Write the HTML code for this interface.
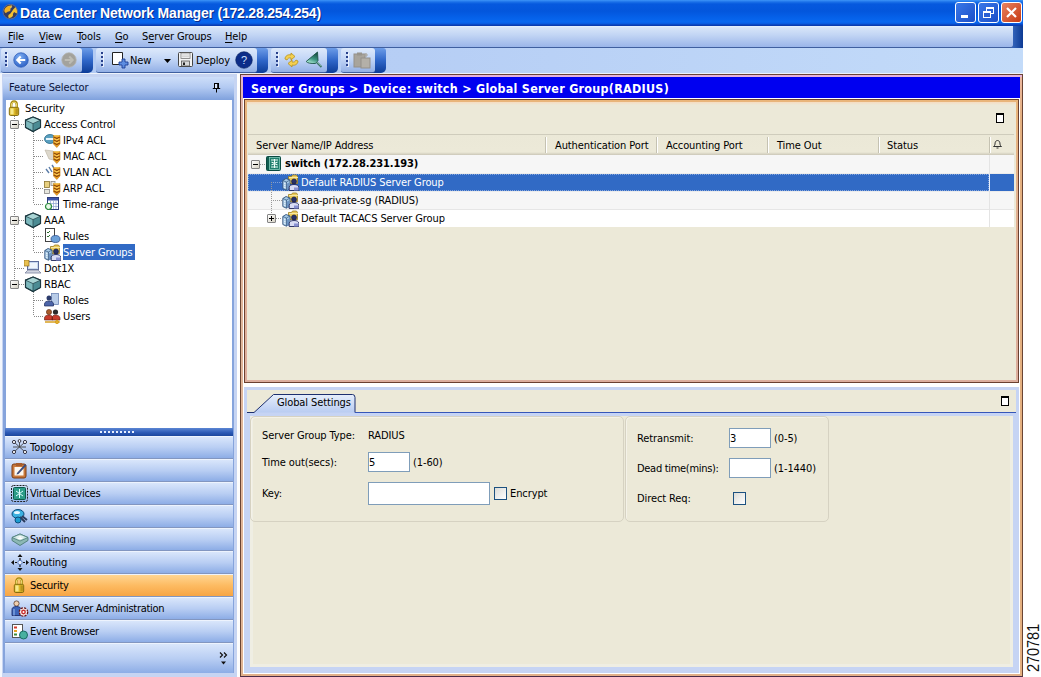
<!DOCTYPE html>
<html lang="en">
<head>
<meta charset="utf-8">
<title>Data Center Network Manager</title>
<style>
*{box-sizing:border-box}
html,body{margin:0;padding:0}
body{width:1041px;height:677px;background:#fff;position:relative;overflow:hidden;font-family:"DejaVu Sans Condensed","Liberation Sans",sans-serif;font-size:11px;color:#000;line-height:13px;letter-spacing:-.1px}
.abs{position:absolute}
#win{left:0;top:0;width:1023px;height:677px;background:#c2d8f8;overflow:hidden}
#title{left:0;top:0;width:1023px;height:26px;background:linear-gradient(#3d95f8 0,#1a70e8 2px,#0659de 4px,#0356dc 11px,#0560e8 17px,#0868f0 22px,#0858dc 24px,#0a3cb0 25px,#0a3cb0 26px)}
#title .t{left:20px;top:6px;color:#fff;font:bold 14px "Liberation Sans",sans-serif;letter-spacing:-.2px;line-height:15px;white-space:nowrap;text-shadow:1px 1px 0 #0a2a88}
.wb{top:2px;width:21px;height:21px;border:1px solid #fff;border-radius:3px;background:linear-gradient(135deg,#3a78e8,#1c4fc8)}
#menubar{left:0;top:26px;width:1013px;height:22px;background:linear-gradient(#e6f2fe 0,#d6e4f8 2px,#c2d5f4 9px,#9ab5e9 21px);border-bottom:1px solid #3f5f9f;border-radius:0 0 3px 0}
#menuend{left:1010px;top:26px;width:13px;height:22px;background:linear-gradient(90deg,#3d6ec4,#0c3a94)}
.mi{top:30px;white-space:nowrap}
.mi u{text-decoration:underline;text-underline-offset:2px;text-decoration-thickness:1px}
#toolrow{left:0;top:48px;width:1023px;height:26px;background:linear-gradient(90deg,#b2caf3,#b6cef5 40%,#c3dbf9)}
.tb{top:48px;height:25px;background:linear-gradient(#dde9fb,#c3d6f6 45%,#93b0e6);border-radius:3px 3px 3px 3px;border-bottom:1px solid #3f5f9f}
.tbe{top:48px;height:25px;background:linear-gradient(#6c9ce8,#2f66c8 50%,#0c3c98);border-radius:0 3px 5px 0}
.grip{width:2px;height:14px;top:52px;background:repeating-linear-gradient(#27408b 0 2px,transparent 2px 4px);box-shadow:1px 1px 0 rgba(255,255,255,.7)}
.tt{top:54px;white-space:nowrap}

.hs{top:137px;width:2px;height:16px;background:linear-gradient(90deg,#c5c2b2 0 1px,#fff 1px 2px)}
.ht{top:139px;white-space:nowrap}
.pm{width:9px;height:9px;border:1px solid #848484;background:linear-gradient(135deg,#fff,#d6d2c4);border-radius:1px}
.pm i{position:absolute;left:1px;top:3px;width:5px;height:1px;background:#000}
.pm b{position:absolute;left:3px;top:1px;width:1px;height:5px;background:#000}
.gb{border:1px solid #d6d2c2;border-radius:5px;box-shadow:inset 1px 1px 0 #f4f2e8}
.lb{white-space:nowrap}
.inp{border:1px solid #7f9db9;background:#fff}
.inp span{position:absolute;left:0;top:3px}
.cb{width:13px;height:13px;border:1px solid #1c5180;background:linear-gradient(135deg,#dcdcd7,#fff)}

.hd{height:1px;background:repeating-linear-gradient(90deg,#888 0 1px,transparent 1px 2px)}
.tl{white-space:nowrap}
.bl{letter-spacing:-.25px}
.sb{left:5px;width:228px;height:23px;background:linear-gradient(#d9e6fb,#b9cef3 50%,#8dade6);border-bottom:1px solid #8296c0;border-top:1px solid #edf3fd}
</style>
</head>
<body>

<svg width="0" height="0" style="position:absolute"><defs>
<g id="sg">
  <path d="M6.500 2.500h3l1-1.500h4l1 1.500v7h-9z" fill="#ecca58" stroke="#9c7c20" stroke-width=".8"/>
  <path d="M7 3.500h9" stroke="#f8e8a0" stroke-width="1"/>
  <path d="M.800 6.500l3.200-2 4 1.500v8l-3.600 2.200-3.600-1.700z" fill="#a8cce8" stroke="#34547c" stroke-width=".9"/>
  <path d="M4.400 8v8" stroke="#34547c" stroke-width=".8"/>
  <path d="M.800 6.500l3.600 1.500 3.600-2" fill="none" stroke="#34547c" stroke-width=".7"/>
  <path d="M1.800 9l1.800.8M1.800 11l1.800.8M1.800 13l1.800.8" stroke="#fff" stroke-width=".8"/>
  <path d="M5 9.500l2.200-1v6.500l-2.200 1.200z" fill="#6c94c4"/>
  <circle cx="12" cy="7.400" r="2.500" fill="#27306a" stroke="#10163c" stroke-width=".6"/>
  <path d="M7.200 16.500v-3c0-2 1.800-3 4.800-3s4.800 1 4.800 3v3z" fill="#d8dcf4" stroke="#1c2458" stroke-width=".9"/>
  <path d="M12 13.500h4.300v3H12z" fill="#8890d0"/>
</g>
</defs></svg>

<svg width="0" height="0" style="position:absolute"><defs>
<g id="lock"><path d="M3.200 8V5c0-4.600 5.600-4.600 5.600 0V8" fill="none" stroke="#a88a14" stroke-width="2.400"/><path d="M3.300 8V5c0-3.800 5.400-3.800 5.400 0V8" fill="none" stroke="#f4e27c" stroke-width="1"/><rect x="1.300" y="7.300" width="9.400" height="8.200" rx="1.400" fill="#dcb828" stroke="#7c6408" stroke-width=".9"/><rect x="2.400" y="8.400" width="3.200" height="6" fill="#f6e88c"/><rect x="7.500" y="8.400" width="2.400" height="6" fill="#b8941c"/></g>
<g id="cube"><path d="M9 1l7.500 3.200v7.300L9 15.500 1.500 11.500V4.200z" fill="#7cb8bc" stroke="#1c3840" stroke-width="1.100"/><path d="M9 7.600l7.500-3.400v7.300L9 15.500z" fill="#4c8c94"/><path d="M9 1l7.500 3.200L9 7.600 1.500 4.200z" fill="#a8d4d4"/><path d="M1.500 4.200L9 7.600l7.500-3.400M9 7.600v7.900" fill="none" stroke="#2c4c54" stroke-width=".8"/><path d="M9 1l7.500 3.200v7.300L9 15.500 1.500 11.500V4.200z" fill="none" stroke="#1c3840" stroke-width="1.100"/></g>
<g id="tl"><path d="M9.500 3.500h6.500v8.500l-3.200 3.500-3.300-3.500z" fill="#f0a020" stroke="#c07810" stroke-width=".6"/><path d="M9.800 5l3 1.500 3-1.500M9.800 8l3 1.500 3-1.500M9.800 11l3 1.500 3-1.500" fill="none" stroke="#8c4a0c" stroke-width="1.300"/><path d="M10 3.800h5.500M10.500 6.800l2.300 1 2.300-1M10.500 9.800l2.300 1 2.300-1" fill="none" stroke="#ffe070" stroke-width=".8"/></g>
</defs></svg>
<div id="win" class="abs">

<!-- title bar -->
<div id="title" class="abs">
  <svg class="abs" style="left:2px;top:3px" width="17" height="17" viewBox="0 0 17 17"><circle cx="8.300" cy="8.700" r="7.300" fill="#353c5e"/><path d="M3 5.500C4.500 3 7.500 2 9.500 2.500 10 4 9 5 8 5.500 9 6.500 8.500 8 7 8.500 5.500 8 5 9.500 3.500 10 2 9 2 7 3 5.500z" fill="#f2b020"/><path d="M13.500 4c1.500 1.500 2 4 1.500 6-1 .500-2 0-2.500-1-1 .500-2 2-1.500 3.500-.500 1.500-2 2.500-4 2.500-1-1-1-2.500 0-3.500 1.500-.500 2-2 3-3 .500-1.500 2-3 3.500-4.500z" fill="#f4c030"/><path d="M9.500 2.500C10 4 9 5 8 5.500" fill="none" stroke="#fff0a0" stroke-width=".6"/><circle cx="8.300" cy="8.700" r="7.300" fill="none" stroke="#5c6a94" stroke-width="1"/></svg>
  <div class="abs t">Data Center Network Manager (172.28.254.254)</div>
  <div class="abs wb" style="left:955px"><div class="abs" style="left:5px;top:12px;width:7px;height:3px;background:#fff"></div></div>
  <div class="abs wb" style="left:978px"><div class="abs" style="left:7px;top:4px;width:8px;height:7px;border:1px solid #fff;border-top-width:2px"></div><div class="abs" style="left:4px;top:8px;width:8px;height:7px;border:1px solid #fff;border-top-width:2px;background:#2a5fd4"></div></div>
  <div class="abs wb" style="left:1001px;background:linear-gradient(135deg,#e8825f,#c73a14)"><svg class="abs" style="left:3px;top:3px" width="13" height="13" viewBox="0 0 13 13"><path d="M2 2l9 9M11 2l-9 9" stroke="#fff" stroke-width="2.2"/></svg></div>
</div>

<!-- menu bar -->
<div id="menuend" class="abs"></div>
<div id="menubar" class="abs"></div>
<div class="abs mi" style="left:8px"><u>F</u>ile</div>
<div class="abs mi" style="left:39px"><u>V</u>iew</div>
<div class="abs mi" style="left:77px"><u>T</u>ools</div>
<div class="abs mi" style="left:115px"><u>G</u>o</div>
<div class="abs mi" style="left:142px">S<u>e</u>rver Groups</div>
<div class="abs mi" style="left:225px"><u>H</u>elp</div>

<!-- toolbars -->
<div id="toolrow" class="abs"></div>
<div class="abs tbe" style="left:72px;width:21px"></div>
<div class="abs tb" style="left:1px;width:81px"></div>
<div class="abs grip" style="left:5px"></div>
<svg class="abs" style="left:13px;top:52px" width="16" height="16" viewBox="0 0 17 17"><defs><radialGradient id="bk" cx=".4" cy=".3" r=".8"><stop offset="0" stop-color="#7fb0f4"/><stop offset="1" stop-color="#2458c0"/></radialGradient></defs><circle cx="8.500" cy="8.500" r="7.700" fill="url(#bk)" stroke="#2c5cb8" stroke-width=".8"/><path d="M13 8.500H5M8.200 4.800L4.500 8.500l3.700 3.700" fill="none" stroke="#fff" stroke-width="2.200"/></svg>
<div class="abs tt" style="left:32px">Back</div>
<svg class="abs" style="left:61px;top:52px" width="16" height="16" viewBox="0 0 17 17"><circle cx="8.500" cy="8.500" r="7.700" fill="#a3a29c" stroke="#b4b4b0" stroke-width=".8"/><path d="M4 8.500h8M8.800 4.800l3.700 3.700-3.700 3.700" fill="none" stroke="#bdbcb4" stroke-width="2"/></svg>

<div class="abs tbe" style="left:246px;width:22px"></div>
<div class="abs tb" style="left:96px;width:161px"></div>
<div class="abs grip" style="left:101px"></div>
<svg class="abs" style="left:112px;top:52px" width="17" height="17" viewBox="0 0 17 17"><path d="M.500 .500h10v12h-10z" fill="#fff" stroke="#222" stroke-width="1"/><path d="M10 8.500h3v3h3v3h-3v3h-3v-3h-3v-3h3z" transform="translate(0,-1.500)" fill="#5c8ce0" stroke="#1c3c94" stroke-width=".9"/></svg>
<div class="abs tt" style="left:130px">New</div>
<svg class="abs" style="left:164px;top:59px" width="7" height="4" viewBox="0 0 7 4"><path d="M0 0h7L3.500 4z" fill="#000"/></svg>
<svg class="abs" style="left:178px;top:52px" width="15" height="15" viewBox="0 0 15 15"><rect x=".5" y=".5" width="14" height="14" rx="1" fill="#f4f4f4" stroke="#444"/><rect x="3" y="1" width="9" height="5.500" fill="#fff" stroke="#777" stroke-width=".8"/><path d="M4 3h7M4 4.800h7" stroke="#aaa" stroke-width=".7"/><rect x="3.500" y="9" width="8" height="5" fill="#d8d8d8" stroke="#555" stroke-width=".8"/><rect x="5" y="10.500" width="2" height="2.500" fill="#222"/></svg>
<div class="abs tt" style="left:196px">Deploy</div>
<svg class="abs" style="left:235px;top:51px" width="18" height="18" viewBox="0 0 18 18"><circle cx="9" cy="9" r="8.300" fill="#0c2c88" stroke="#07205c" stroke-width=".6"/><text x="9" y="13" text-anchor="middle" font-family="Liberation Sans, sans-serif" font-size="11" fill="#cfe0ff">?</text></svg>

<div class="abs tbe" style="left:316px;width:22px"></div>
<div class="abs tb" style="left:271px;width:56px"></div>
<div class="abs grip" style="left:276px"></div>
<svg class="abs" style="left:283px;top:52px" width="17" height="17" viewBox="0 0 17 17"><path d="M2 7c0-3 3-5 6-4l0-2 4 3.500-4 3.500 0-2c-2-.5-3.500.5-4 2z" fill="#f4d050" stroke="#b8901c" stroke-width=".8"/><path d="M15 9c0 3-3 5-6 4l0 2-4-3.500 4-3.500 0 2c2 .5 3.500-.5 4-2z" fill="#f4d050" stroke="#b8901c" stroke-width=".8"/></svg>
<svg class="abs" style="left:305px;top:51px" width="18" height="18" viewBox="0 0 18 18"><defs><linearGradient id="fg" x1=".7" y1="0" x2=".3" y2="1"><stop offset="0" stop-color="#12483e"/><stop offset=".55" stop-color="#3c9480"/><stop offset="1" stop-color="#b4f0dc"/></linearGradient></defs><path d="M12.500 1L1.200 10.500Q3 12.800 10.500 12.500L13 9.500z" fill="url(#fg)" stroke="#1c5448" stroke-width=".9"/><path d="M11.500 11l5 5" stroke="#3c7468" stroke-width="2"/><path d="M11.800 10.600l4.600 4.600" stroke="#a8d8cc" stroke-width=".7"/></svg>

<div class="abs tbe" style="left:364px;width:22px"></div>
<div class="abs tb" style="left:341px;width:34px"></div>
<div class="abs grip" style="left:346px"></div>
<svg class="abs" style="left:353px;top:52px" width="18" height="17" viewBox="0 0 18 17"><rect x="1" y="2" width="11" height="13" fill="#a8a49c" stroke="#94908a"/><rect x="4" y=".500" width="5" height="3" fill="#98948c"/><rect x="8" y="6" width="9" height="10" fill="#b4b0a8" stroke="#94908a"/><path d="M13 1v4M11 3h4" stroke="#a8a49c" stroke-width="1.200"/></svg>

<!-- ===== left panel ===== -->
<div class="abs" style="left:0;top:74px;width:2px;height:603px;background:#f4f7fd"></div>
<div class="abs" style="left:2px;top:74px;width:235px;height:603px;background:#c6d4f2"></div>
<div class="abs" style="left:3px;top:77px;width:231px;height:23px;background:linear-gradient(#cddef9,#b3caf2 45%,#7fa1dd)"></div>
<div class="abs" style="left:9px;top:81px;color:#0a143c;white-space:nowrap">Feature Selector</div>
<svg class="abs" style="left:212px;top:83px" width="9" height="10" viewBox="0 0 9 10"><rect x="2.500" y=".500" width="4" height="5" fill="#dbe6fa" stroke="#000" stroke-width="1"/><path d="M6 .500v5" stroke="#000" stroke-width="1.600"/><path d="M.800 5.500h7.400M4.500 6v3.500" fill="none" stroke="#000" stroke-width="1"/></svg>
<div class="abs" style="left:3px;top:100px;width:231px;height:573px;background:#86a4dc"></div>
<div class="abs" style="left:6px;top:100px;width:226px;height:328px;background:#fff"></div>
<div class="abs" style="left:5px;top:428px;width:228px;height:8px;background:linear-gradient(#5c86d4,#2a58b4 60%,#1c469c)"></div>
<div class="abs" style="left:100px;top:431px;width:36px;height:2px;background:repeating-linear-gradient(90deg,#e8f0ff 0 2px,transparent 2px 4px)"></div>

<!-- tree -->
<div class="abs" style="left:14px;top:116px;width:1px;height:168px;background:repeating-linear-gradient(#888 0 1px,transparent 1px 2px)"></div>
<div class="abs" style="left:33px;top:132px;width:1px;height:72px;background:repeating-linear-gradient(#888 0 1px,transparent 1px 2px)"></div>
<div class="abs" style="left:33px;top:228px;width:1px;height:24px;background:repeating-linear-gradient(#888 0 1px,transparent 1px 2px)"></div>
<div class="abs" style="left:33px;top:292px;width:1px;height:24px;background:repeating-linear-gradient(#888 0 1px,transparent 1px 2px)"></div>
<div class="abs hd" style="left:19px;top:124px;width:6px"></div>
<div class="abs hd" style="left:19px;top:220px;width:6px"></div>
<div class="abs hd" style="left:15px;top:268px;width:10px"></div>
<div class="abs hd" style="left:19px;top:284px;width:6px"></div>
<div class="abs hd" style="left:34px;top:140px;width:10px"></div>
<div class="abs hd" style="left:34px;top:156px;width:10px"></div>
<div class="abs hd" style="left:34px;top:172px;width:10px"></div>
<div class="abs hd" style="left:34px;top:188px;width:10px"></div>
<div class="abs hd" style="left:34px;top:204px;width:10px"></div>
<div class="abs hd" style="left:34px;top:236px;width:10px"></div>
<div class="abs hd" style="left:34px;top:252px;width:10px"></div>
<div class="abs hd" style="left:34px;top:300px;width:10px"></div>
<div class="abs hd" style="left:34px;top:316px;width:10px"></div>

<svg class="abs" style="left:8px;top:100px" width="12" height="16" viewBox="0 0 12 16"><use href="#lock"/></svg>
<div class="abs tl" style="left:25px;top:102px">Security</div>

<div class="abs pm" style="left:10px;top:120px"><i></i></div>
<svg class="abs" style="left:24px;top:116px" width="18" height="16" viewBox="0 0 18 16"><use href="#cube"/></svg>
<div class="abs tl" style="left:44px;top:118px">Access Control</div>
<svg class="abs" style="left:44px;top:132px" width="17" height="16" viewBox="0 0 17 16"><ellipse cx="6" cy="7" rx="5.500" ry="4.500" fill="#5aa0c0" stroke="#2c6c8c" stroke-width=".8"/><rect x="2" y="6" width="8" height="2" fill="#e8f4fa"/><use href="#tl"/></svg>
<div class="abs tl" style="left:63px;top:134px">IPv4 ACL</div>
<svg class="abs" style="left:44px;top:148px" width="17" height="16" viewBox="0 0 17 16"><path d="M1 2l8 1 1 9-5-1z" fill="#ddd8cc" stroke="#b8b0a0" stroke-width=".6"/><use href="#tl"/></svg>
<div class="abs tl" style="left:63px;top:150px">MAC ACL</div>
<svg class="abs" style="left:44px;top:164px" width="17" height="16" viewBox="0 0 17 16"><path d="M2 5l3 4M5 3l3 5M8 1l2 3" stroke="#5a7ca8" stroke-width="1.400"/><use href="#tl"/></svg>
<div class="abs tl" style="left:63px;top:166px">VLAN ACL</div>
<svg class="abs" style="left:44px;top:180px" width="17" height="16" viewBox="0 0 17 16"><rect x=".5" y="1.500" width="5" height="6" fill="#e8d080" stroke="#8c7430" stroke-width=".8"/><rect x=".5" y="9.500" width="5" height="4" fill="#e8e8e0" stroke="#888" stroke-width=".8"/><rect x="7" y="1.500" width="4" height="4" fill="#e8e8e0" stroke="#888" stroke-width=".8"/><use href="#tl"/></svg>
<div class="abs tl" style="left:63px;top:182px">ARP ACL</div>
<svg class="abs" style="left:44px;top:196px" width="17" height="16" viewBox="0 0 17 16"><rect x="3.500" y="1.500" width="11" height="12" fill="#fff" stroke="#2c3c7c" stroke-width="1"/><rect x="4" y="2" width="10" height="2.500" fill="#3c54a8"/><path d="M6.500 5v8M9.500 5v8M12 5v8M4 7.500h10M4 10.500h10" stroke="#8ca0d0" stroke-width=".7"/><circle cx="4.500" cy="10.500" r="3" fill="#e8f8e8" stroke="#2c8c3c" stroke-width="1.200"/></svg>
<div class="abs tl" style="left:63px;top:198px">Time-range</div>

<div class="abs pm" style="left:10px;top:216px"><i></i></div>
<svg class="abs" style="left:24px;top:212px" width="18" height="16" viewBox="0 0 18 16"><use href="#cube"/></svg>
<div class="abs tl" style="left:44px;top:214px">AAA</div>
<svg class="abs" style="left:44px;top:228px" width="17" height="16" viewBox="0 0 17 16"><rect x="1.500" y=".500" width="9" height="13" fill="#fff" stroke="#444" stroke-width="1"/><path d="M3 4l1 1 2-2M3 8l1 1 2-2" stroke="#2c6c2c" stroke-width="1" fill="none"/><ellipse cx="11.500" cy="11" rx="4.500" ry="3.500" fill="#6ca0d8" stroke="#2c4c8c" stroke-width=".8"/></svg>
<div class="abs tl" style="left:63px;top:230px">Rules</div>
<div class="abs" style="left:63px;top:244px;width:72px;height:16px;background:#316ac5"></div>
<svg class="abs" style="left:44px;top:244px" width="17" height="17" viewBox="0 0 17 17"><use href="#sg"/></svg>
<div class="abs tl" style="left:63px;top:246px;color:#fff">Server Groups</div>

<svg class="abs" style="left:24px;top:260px" width="18" height="16" viewBox="0 0 18 16"><rect x="3.500" y="1.500" width="11" height="8" fill="#c8d8f0" stroke="#5c6c9c" stroke-width="1"/><rect x="5" y="3" width="8" height="5" fill="#eef4fc"/><path d="M1 13l3-3h10l3 3z" fill="#d0d4e0" stroke="#7c84a0" stroke-width=".8"/><rect x="0" y="0" width="5" height="6" fill="#e8c050" stroke="#8c6c20" stroke-width=".7"/></svg>
<div class="abs tl" style="left:44px;top:262px">Dot1X</div>

<div class="abs pm" style="left:10px;top:280px"><i></i></div>
<svg class="abs" style="left:24px;top:276px" width="18" height="16" viewBox="0 0 18 16"><use href="#cube"/></svg>
<div class="abs tl" style="left:44px;top:278px">RBAC</div>
<svg class="abs" style="left:44px;top:292px" width="17" height="16" viewBox="0 0 17 16"><rect x="7.500" y="1.500" width="7" height="11" fill="#b8cce8" stroke="#6c84b4" stroke-width=".8"/><circle cx="5" cy="6" r="2.500" fill="#2c3c6c"/><path d="M.500 14v-2c0-2 2-3 4.500-3s4.500 1 4.500 3v2z" fill="#4c64a8" stroke="#1c2c5c" stroke-width=".7"/></svg>
<div class="abs tl" style="left:63px;top:294px">Roles</div>
<svg class="abs" style="left:44px;top:308px" width="17" height="16" viewBox="0 0 17 16"><circle cx="5" cy="4" r="2.600" fill="#a85c2c" stroke="#5c2c10" stroke-width=".6"/><circle cx="11.500" cy="4" r="2.600" fill="#2c2c2c"/><path d="M.500 12v-2c0-2 2-3 4.500-3s3.500 1 3.500 3v2zM8 12v-2c0-2 1.500-3 3.500-3s4.500 1 4.500 3v2z" fill="#c83c2c" stroke="#5c1c10" stroke-width=".6"/><path d="M1 14h10M11 14l2-1.500 2 1.500-2 1.500z" stroke="#d8a020" stroke-width="1.500" fill="#f0c840"/></svg>
<div class="abs tl" style="left:63px;top:310px">Users</div>

<!-- stacked buttons -->
<div class="abs sb" style="top:436px"></div><div class="abs tl" style="left:30px;top:441px;letter-spacing:0px">Topology</div>
<div class="abs sb" style="top:459px"></div><div class="abs tl" style="left:30px;top:464px;letter-spacing:0px">Inventory</div>
<div class="abs sb" style="top:482px"></div><div class="abs tl" style="left:30px;top:487px;letter-spacing:-0.28px">Virtual Devices</div>
<div class="abs sb" style="top:505px"></div><div class="abs tl" style="left:30px;top:510px;letter-spacing:0px">Interfaces</div>
<div class="abs sb" style="top:528px"></div><div class="abs tl" style="left:30px;top:533px;letter-spacing:-0.28px">Switching</div>
<div class="abs sb" style="top:551px"></div><div class="abs tl" style="left:30px;top:556px;letter-spacing:-0.1px">Routing</div>
<div class="abs sb" style="top:574px;background:linear-gradient(#ffd592,#fdbb62 50%,#f7a544)"></div><div class="abs tl" style="left:30px;top:579px;letter-spacing:-0.25px">Security</div>
<div class="abs sb" style="top:597px"></div><div class="abs tl" style="left:30px;top:602px;letter-spacing:-0.28px">DCNM Server Administration</div>
<div class="abs sb" style="top:620px"></div><div class="abs tl" style="left:30px;top:625px;letter-spacing:-0.2px">Event Browser</div>
<div class="abs sb" style="top:643px;height:30px;border-bottom:none"></div>
<svg class="abs" style="left:219px;top:652px" width="9" height="13" viewBox="0 0 9 13"><path d="M1 .500l2.500 2.500-2.500 2.500M5 .500l2.500 2.500-2.500 2.500" fill="none" stroke="#111" stroke-width="1.200"/><path d="M2 9.500h5l-2.500 3z" fill="#111"/></svg>

<!-- button icons -->
<svg class="abs" style="left:11px;top:439px" width="17" height="17" viewBox="0 0 17 17"><path d="M3 3l11 10M14 3l-11 10M8.500 2v6M2 8h13" stroke="#444" stroke-width=".9"/><circle cx="3" cy="3" r="1.600" fill="#fff" stroke="#334"/><circle cx="14" cy="3" r="1.600" fill="#fff" stroke="#334"/><circle cx="3" cy="13" r="1.600" fill="#fff" stroke="#334"/><circle cx="14" cy="13" r="1.600" fill="#fff" stroke="#334"/><circle cx="8.500" cy="2" r="1.400" fill="#fff" stroke="#334"/></svg>
<svg class="abs" style="left:11px;top:462px" width="17" height="17" viewBox="0 0 17 17"><rect x="1" y="2" width="14" height="14" rx="2" fill="#c8783c" stroke="#7c3c14"/><rect x="3.500" y="5" width="9" height="8.500" fill="#fdf8f0"/><rect x="5" y="1" width="6" height="3" fill="#a85c2c"/><path d="M6 11l8-9 1.500 1.500-8 8.500-2 .500z" fill="#3c4c7c"/></svg>
<svg class="abs" style="left:11px;top:485px" width="17" height="17" viewBox="0 0 17 17"><rect x=".5" y=".5" width="16" height="16" rx="2" fill="none" stroke="#222" stroke-dasharray="2 1"/><rect x="2.500" y="2.500" width="12" height="12" rx="1" fill="#2c9c88" stroke="#0c5c4c"/><path d="M8.500 4v9M5 6l7 5M12 6l-7 5" stroke="#dff" stroke-width="1"/></svg>
<svg class="abs" style="left:11px;top:508px" width="18" height="17" viewBox="0 0 18 17"><ellipse cx="7" cy="6" rx="6" ry="4.500" fill="#3cb0e0" stroke="#0c4c7c"/><ellipse cx="6" cy="4.500" rx="3" ry="1.600" fill="#e8f8ff"/><path d="M9 9l5 5M11 8l5 4" stroke="#2c3c5c" stroke-width="2"/><circle cx="7" cy="12" r="3" fill="#1c9cd0" stroke="#0c4c7c"/></svg>
<svg class="abs" style="left:11px;top:531px" width="18" height="17" viewBox="0 0 18 17"><path d="M1 6.500l8-3.500 8 3.500v3l-8 5-8-5z" fill="#8cb8b4" stroke="#4c7c78" stroke-width=".9"/><path d="M1 6.500l8-3.500 8 3.500-8 3.500z" fill="#c4e0dc" stroke="#4c7c78" stroke-width=".8"/><path d="M5.500 6h7M6.500 7.500h5M9 5v3.500" stroke="#fff" stroke-width="1.100"/></svg>
<svg class="abs" style="left:11px;top:554px" width="18" height="17" viewBox="0 0 18 17"><path d="M9 0l2.500 3h-5zM9 17l2.500-3h-5zM0 8.500l3-2.500v5zM18 8.500l-3-2.500v5z" fill="#111"/><path d="M9 4v2M9 11v2M4 8.500h2M12 8.500h2" stroke="#111" stroke-width="1.200"/><circle cx="9" cy="8.500" r="2.200" fill="#e8f0ff" stroke="#5c7cbc"/></svg>
<svg class="abs" style="left:13px;top:577px" width="12" height="16" viewBox="0 0 12 16"><use href="#lock"/></svg>
<svg class="abs" style="left:11px;top:600px" width="18" height="17" viewBox="0 0 18 17"><circle cx="5.500" cy="3.500" r="2.600" fill="#f0d0b0" stroke="#5c3c2c" stroke-width=".8"/><path d="M1 15.500V9.500c0-2 1.800-3 4.500-3s4.500 1 4.500 3v6z" fill="#3c64b8" stroke="#1c2c6c" stroke-width=".9"/><path d="M3 9v6.500" stroke="#8cb0e8" stroke-width="1.200"/><circle cx="12.500" cy="12" r="4.200" fill="#f8f0f0" stroke="#6c1414" stroke-width="1.300" stroke-dasharray="2.200 1.100"/><circle cx="12.500" cy="12" r="2.400" fill="#c82c2c"/><circle cx="12.500" cy="12" r="1" fill="#fff"/></svg>
<svg class="abs" style="left:11px;top:623px" width="18" height="17" viewBox="0 0 18 17"><rect x="1.500" y="1.500" width="10" height="13" fill="#fff" stroke="#555"/><rect x="3" y="3.500" width="3" height="2" fill="#d83c2c"/><rect x="3" y="7" width="3" height="2" fill="#e8a020"/><rect x="3" y="10.500" width="3" height="2" fill="#3c8c3c"/><circle cx="12.500" cy="12" r="4" fill="#48b0a0" stroke="#1c6c64"/></svg>

<!--LEFT-->


<!-- ===== right panel ===== -->
<div class="abs" style="left:0;top:73px;width:1023px;height:1px;background:#eef3fb"></div>
<div class="abs" style="left:237px;top:74px;width:3px;height:603px;background:#fdfdfd"></div>
<div class="abs" id="rp" style="left:240px;top:74px;width:783px;height:603px;border:1px solid #6a4434;border-bottom-color:#4c2c48;background:#e2b08a"></div>
<div class="abs" style="left:241px;top:75px;width:2px;height:599px;background:linear-gradient(#e6b4dc 0,#e2b6b0 22px,#e0b8a0 60px,#e0b494)"></div>
<div class="abs" style="left:241px;top:75px;width:781px;height:2px;background:#e6b4dc"></div>
<div class="abs" style="left:1020px;top:77px;width:2px;height:599px;background:linear-gradient(#ecb8a0,#e4b080 40px)"></div>
<div class="abs" style="left:243px;top:77px;width:777px;height:597px;background:#fff"></div>
<div class="abs" id="bt" style="left:243px;top:77px;width:777px;height:21px;background:#0000f0"></div>
<div class="abs" style="left:251px;top:81px;color:#fff;font:bold 12.4px/15px 'DejaVu Sans Condensed','Liberation Sans',sans-serif;letter-spacing:.29px;white-space:nowrap">Server Groups &gt; Device: switch &gt; Global Server Group(RADIUS)</div>

<!-- upper inner panel -->
<div class="abs" style="left:244px;top:99px;width:775px;height:284px;border:1px solid #6a4030;background:linear-gradient(#e9b57a,#e2b090 40%,#dcae9e)"></div>
<div class="abs" style="left:247px;top:102px;width:769px;height:278px;background:#ece9d8"></div>
<div class="abs" style="left:247px;top:102px;width:769px;height:3px;background:linear-gradient(#f6dcc0,#ece9d8)"></div>
<!-- maximize icon -->
<div class="abs" style="left:996px;top:113px;width:8px;height:10px;border:1px solid #000;border-top-width:2px;background:#fff"></div>

<!-- table header -->
<div class="abs" id="th" style="left:248px;top:134px;width:766px;height:21px;background:linear-gradient(#ebe8d7 0,#ece9d8 17px,#e2dfce 18px,#d6d2c2 19px,#cbc7b8 20px,#c5c1b2 21px);border-top:1px solid #cfccbc"></div>
<div class="abs hs" style="left:545px"></div><div class="abs hs" style="left:656px"></div><div class="abs hs" style="left:767px"></div><div class="abs hs" style="left:878px"></div><div class="abs hs" style="left:989px"></div>
<div class="abs ht" style="left:256px">Server Name/IP Address</div>
<div class="abs ht" style="left:555px">Authentication Port</div>
<div class="abs ht" style="left:666px">Accounting Port</div>
<div class="abs ht" style="left:777px">Time Out</div>
<div class="abs ht" style="left:887px">Status</div>
<svg class="abs" style="left:992px;top:139px" width="11" height="11" viewBox="0 0 11 11"><path d="M5.5 1.5c-2 0-2.5 2-2.5 3.500c0 1.500-1 2-1.500 2.500h8c-.5-.5-1.500-1-1.500-2.500c0-1.500-.5-3.500-2.500-3.500z" fill="none" stroke="#333" stroke-width="1"/><path d="M4.500 9h2" stroke="#333" stroke-width="1"/></svg>

<!-- rows -->
<div class="abs" style="left:248px;top:155px;width:766px;height:19px;background:#f6f6f6;border-bottom:1px solid #ececec"></div>
<div class="abs" style="left:248px;top:174px;width:766px;height:17px;background:#316ac5"></div>
<div class="abs" style="left:248px;top:174px;width:741px;height:17px;border:1px dotted #86a6dc"></div>
<div class="abs" style="left:248px;top:191px;width:766px;height:19px;background:#f6f6f6;border-bottom:1px solid #e6e6e6;border-top:1px solid #ececec"></div>
<div class="abs" style="left:248px;top:210px;width:766px;height:17px;background:#fff"></div>
<div class="abs" style="left:989px;top:155px;width:1px;height:72px;background:#e4e4e4"></div>
<div class="abs" style="left:989px;top:174px;width:1px;height:17px;background:#e8eefa"></div>

<!-- row 1 -->
<div class="abs pm" style="left:251px;top:160px"><i></i></div>
<div class="abs" style="left:260px;top:164px;width:5px;height:1px;background:repeating-linear-gradient(90deg,#999 0 1px,transparent 1px 2px)"></div>
<svg class="abs" style="left:266px;top:156px" width="15" height="15" viewBox="0 0 15 15"><rect x=".5" y=".5" width="14" height="14" rx="1" fill="#1f7e6c" stroke="#0a4a40"/><rect x="1" y="1" width="2" height="13" fill="#0f5c50"/><rect x="3.500" y="1.500" width="10" height="12" fill="none" stroke="#8fd0c0" stroke-width=".7"/><path d="M5 4h7M5 11h7M5.500 6l6 3M11.500 6l-6 3M8.500 3v9" stroke="#f0fffa" stroke-width="1.100"/></svg>
<div class="abs" style="left:285px;top:157px;font-weight:bold;white-space:nowrap">switch (172.28.231.193)</div>
<!-- row 2 -->
<div class="abs" style="left:271px;top:182px;width:11px;height:1px;background:repeating-linear-gradient(90deg,#7f9fd8 0 1px,transparent 1px 2px)"></div>
<svg class="abs" style="left:282px;top:174px" width="17" height="17" viewBox="0 0 17 17"><use href="#sg"/></svg>
<div class="abs" style="left:301px;top:176px;color:#fff;white-space:nowrap">Default RADIUS Server Group</div>
<!-- row 3 -->
<div class="abs" style="left:271px;top:182px;width:1px;height:36px;background:repeating-linear-gradient(#999 0 1px,transparent 1px 2px)"></div>
<div class="abs" style="left:271px;top:200px;width:11px;height:1px;background:repeating-linear-gradient(90deg,#999 0 1px,transparent 1px 2px)"></div>
<svg class="abs" style="left:282px;top:192px" width="17" height="17" viewBox="0 0 17 17"><use href="#sg"/></svg>
<div class="abs" style="left:301px;top:194px;white-space:nowrap">aaa-private-sg (RADIUS)</div>
<!-- row 4 -->
<div class="abs pm" style="left:267px;top:214px"><i></i><b></b></div>
<div class="abs" style="left:276px;top:218px;width:6px;height:1px;background:repeating-linear-gradient(90deg,#999 0 1px,transparent 1px 2px)"></div>
<svg class="abs" style="left:282px;top:210px" width="17" height="17" viewBox="0 0 17 17"><use href="#sg"/></svg>
<div class="abs" style="left:301px;top:212px;white-space:nowrap">Default TACACS Server Group</div>

<!-- lower panel -->
<div class="abs" style="left:244px;top:387px;width:775px;height:286px;background:#c6d4f4"></div>
<div class="abs" style="left:247px;top:390px;width:769px;height:280px;background:#ece9d8"></div>
<div class="abs" style="left:247px;top:412px;width:769px;height:258px;background:#c6d4f4"></div>
<div class="abs" style="left:250px;top:416px;width:763px;height:251px;background:#ece9d8"></div>
<div class="abs" style="left:1010px;top:416px;width:3px;height:251px;background:#efeee3"></div>
<div class="abs" style="left:250px;top:416px;width:3px;height:251px;background:#efeee3"></div>
<div class="abs" style="left:250px;top:664px;width:763px;height:3px;background:#efeee3"></div>
<svg class="abs" style="left:244px;top:390px" width="775" height="26" viewBox="0 0 775 26">
  <defs><linearGradient id="tg" x1="0" y1="0" x2="0" y2="1"><stop offset="0" stop-color="#e6eefb"/><stop offset="1" stop-color="#b9ccf2"/></linearGradient></defs>
  <path d="M10 22.500L29.500 4.500H108.500Q111 4.500 111 7.500V22.500Z" fill="url(#tg)"/>
  <path d="M3 22.500H10L29.500 4.500H108.500Q111 4.500 111 7.500V22.500H772" fill="none" stroke="#1d2f6f" stroke-width="1"/>
  <path d="M111 22.500H772" stroke="#3656b8" stroke-width="1"/>
</svg>
<div class="abs" style="left:277px;top:396px;white-space:nowrap">Global Settings</div>
<div class="abs" style="left:1001px;top:396px;width:8px;height:10px;border:1px solid #000;border-top-width:2px;background:#fff"></div>

<!-- group boxes -->
<div class="abs gb" style="left:250px;top:416px;width:374px;height:106px"></div>
<div class="abs gb" style="left:625px;top:416px;width:204px;height:106px"></div>
<div class="abs lb" style="left:262px;top:429px">Server Group Type:</div>
<div class="abs lb" style="left:368px;top:429px">RADIUS</div>
<div class="abs lb" style="left:262px;top:456px">Time out(secs):</div>
<div class="abs inp" style="left:368px;top:452px;width:42px;height:20px"><span>5</span></div>
<div class="abs lb" style="left:413px;top:456px">(1-60)</div>
<div class="abs lb" style="left:262px;top:487px">Key:</div>
<div class="abs inp" style="left:368px;top:482px;width:122px;height:23px"></div>
<div class="abs cb" style="left:494px;top:487px"></div>
<div class="abs lb" style="left:510px;top:487px">Encrypt</div>

<div class="abs lb" style="left:637px;top:432px">Retransmit:</div>
<div class="abs inp" style="left:729px;top:428px;width:42px;height:20px"><span>3</span></div>
<div class="abs lb" style="left:774px;top:432px">(0-5)</div>
<div class="abs lb" style="left:637px;top:462px;letter-spacing:-.3px">Dead time(mins):</div>
<div class="abs inp" style="left:729px;top:458px;width:42px;height:20px"></div>
<div class="abs lb" style="left:774px;top:462px">(1-1440)</div>
<div class="abs lb" style="left:637px;top:492px">Direct Req:</div>
<div class="abs cb" style="left:733px;top:492px"></div>

<!--RIGHT-->

</div>
<div class="abs" style="left:1026px;top:672px;transform-origin:0 0;transform:rotate(-90deg) scaleX(.91);font:16px/16px 'Liberation Sans',sans-serif;white-space:nowrap;color:#111">270781</div>
</body>
</html>
